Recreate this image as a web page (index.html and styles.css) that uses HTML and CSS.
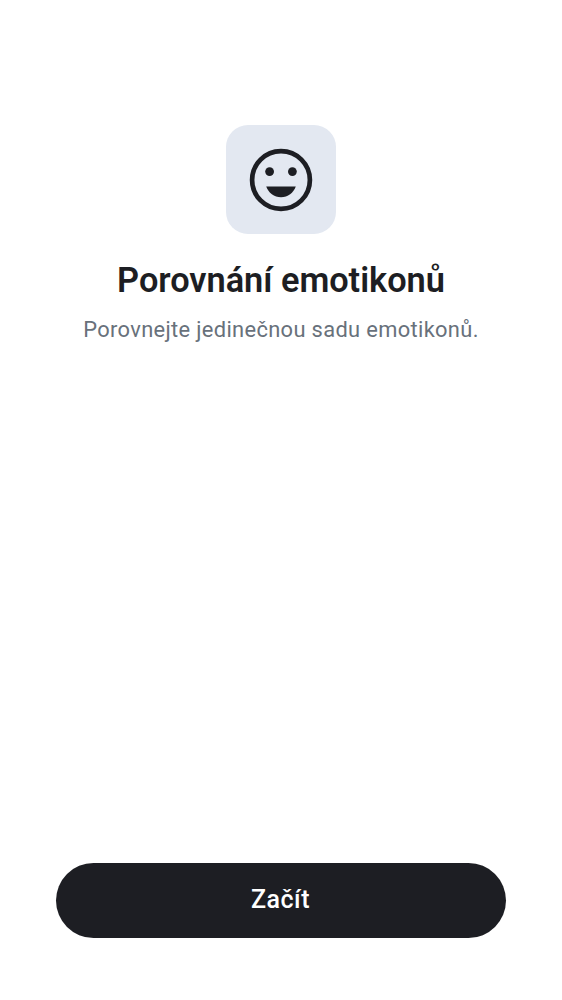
FILE: index.html
```html
<!DOCTYPE html>
<html lang="cs">
<head>
<meta charset="utf-8">
<title>Porovnání emotikonů</title>
<link rel="stylesheet" href="styles.css">
</head>
<body>
<main class="screen">
  <div class="tile">
    <svg class="face" viewBox="0 0 64 64" aria-hidden="true">
      <circle cx="32" cy="32" r="28.9" fill="none" stroke="currentColor" stroke-width="4.7"/>
      <circle cx="20.6" cy="23.6" r="4.4" fill="currentColor"/>
      <circle cx="43.4" cy="23.6" r="4.4" fill="currentColor"/>
      <path d="M17.2 38.500H46.800C44.600 44.800 38.800 49.200 32 49.200S19.400 44.800 17.200 38.500Z" fill="currentColor"/>
    </svg>
  </div>
  <h1 class="title">Porovnání emotikonů</h1>
  <p class="subtitle">Porovnejte jedinečnou sadu emotikonů.</p>
  <button class="start" type="button">Začít</button>
</main>
</body>
</html>
```
FILE: styles.css
```css
* { box-sizing: border-box; }
body { margin: 0; background: #fff; font-family: Roboto, sans-serif; }
.screen {
  height: 1000px;
  padding: 125px 56px 62.5px;
  display: flex;
  flex-direction: column;
  align-items: center;
}
.tile {
  width: 109.4px;
  height: 109.4px;
  border-radius: 22px;
  background: #e3e8f1;
  display: flex;
  align-items: center;
  justify-content: center;
}
.face { width: 64px; height: 64px; color: #1d1e23; }
.title {
  margin: 24.6px 0 0;
  font-size: 34.375px;
  line-height: 42px;
  font-weight: 600;
  letter-spacing: -.03px;
  color: #1d1e23;
  white-space: nowrap;
}
.subtitle {
  margin: 14px 0 0;
  font-size: 21.875px;
  line-height: 30px;
  letter-spacing: .34px;
  color: #68717b;
  white-space: nowrap;
}
.start {
  margin-top: auto;
  width: 100%;
  height: 75px;
  padding: 0 1px 1px 0;
  border: 0;
  border-radius: 37.5px;
  background: #1d1e23;
  color: #fff;
  font: 500 25px/30px Roboto, sans-serif;
  letter-spacing: .5px;
}
```
